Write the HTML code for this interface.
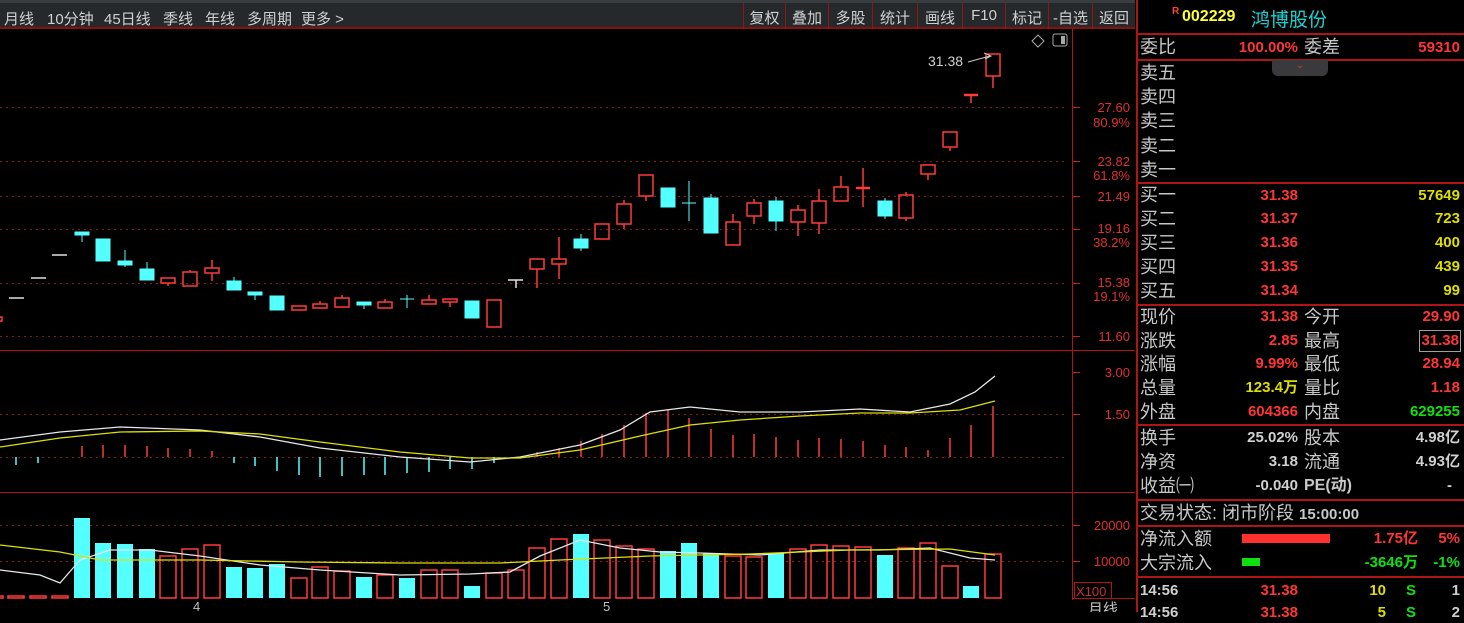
<!DOCTYPE html>
<html><head><meta charset="utf-8"><style>
*{margin:0;padding:0;box-sizing:border-box}
body{width:1464px;height:612px;background:#000;overflow:hidden;position:relative;font-family:"Liberation Sans","Noto Sans CJK SC",sans-serif;color:#c8c8c8}
.tb{position:absolute;left:0;top:0;width:1135px;height:29px;background:#26292c;border-bottom:2px solid #8a1010;border-top:3px solid #3a3d40}
.tb span{position:absolute;top:5px;font-size:15px;color:#d0d0d0}
.tb .b{border-left:1px solid #901515;height:26px;top:0;padding:4px 0 0 0;text-align:center}
.a{position:absolute;font-size:13px;color:#e03030;text-align:right;width:58px;left:1072px}
.rp{position:absolute;left:1136px;top:0;width:328px;height:612px;border-left:2px solid #b01515}
.l{position:absolute;font-size:18px;color:#c8c8c8;line-height:20px;white-space:nowrap}
.v{position:absolute;font-size:15px;font-weight:bold;text-align:right;line-height:20px;white-space:nowrap}
.hl{position:absolute;left:0;width:328px;height:2px;background:#b01515}
.r{color:#ff3636}.y{color:#dede00}.g{color:#10e010}.w{color:#d0d0d0}
</style></head><body>
<div class="tb">
<span style="left:4px">月线</span><span style="left:47px">10分钟</span><span style="left:104px">45日线</span><span style="left:163px">季线</span><span style="left:205px">年线</span><span style="left:247px">多周期</span><span style="left:301px">更多 &gt;</span>
<span class="b" style="left:743px;width:42px">复权</span><span class="b" style="left:785px;width:43px">叠加</span><span class="b" style="left:828px;width:44px">多股</span><span class="b" style="left:872px;width:45px">统计</span><span class="b" style="left:917px;width:45px">画线</span><span class="b" style="left:962px;width:43px">F10</span><span class="b" style="left:1005px;width:43px">标记</span><span class="b" style="left:1048px;width:44px">-自选</span><span class="b" style="left:1092px;width:43px">返回</span>
</div>
<svg width="1136" height="612" style="position:absolute;left:0;top:0" xmlns="http://www.w3.org/2000/svg">
<g stroke="#b01515" stroke-width="1">
<line x1="1072.5" y1="29" x2="1072.5" y2="600"/>
<line x1="0" y1="350.5" x2="1135" y2="350.5"/>
<line x1="0" y1="492.5" x2="1135" y2="492.5"/>
<line x1="1073" y1="598.5" x2="1135" y2="598.5"/>
</g>
<g stroke="#8a1818" stroke-dasharray="2,4">
<line x1="0" y1="107.5" x2="1066" y2="107.5"/><line x1="0" y1="161.5" x2="1066" y2="161.5"/><line x1="0" y1="196.5" x2="1066" y2="196.5"/><line x1="0" y1="229.5" x2="1066" y2="229.5"/><line x1="0" y1="283.5" x2="1066" y2="283.5"/><line x1="0" y1="336.5" x2="1066" y2="336.5"/>
<line x1="0" y1="414.5" x2="1066" y2="414.5"/><line x1="0" y1="457.5" x2="1066" y2="457.5"/>
<line x1="0" y1="525.5" x2="1066" y2="525.5"/><line x1="0" y1="561.5" x2="1066" y2="561.5"/>
</g>
<g stroke="#c02020"><line x1="1073" y1="107.5" x2="1080" y2="107.5"/><line x1="1073" y1="161.5" x2="1080" y2="161.5"/><line x1="1073" y1="196.5" x2="1080" y2="196.5"/><line x1="1073" y1="229.5" x2="1080" y2="229.5"/><line x1="1073" y1="283.5" x2="1080" y2="283.5"/><line x1="1073" y1="336.5" x2="1080" y2="336.5"/><line x1="1073" y1="372.5" x2="1080" y2="372.5"/><line x1="1073" y1="414.5" x2="1080" y2="414.5"/><line x1="1073" y1="525.5" x2="1080" y2="525.5"/><line x1="1073" y1="561.5" x2="1080" y2="561.5"/></g>
<!-- candles -->
<g stroke="#ff3b3b" fill="none" stroke-width="1.5">
<rect x="-12" y="317" width="14" height="4"/>
<rect x="161" y="278" width="14" height="5"/><line x1="168" y1="283" x2="168" y2="286"/>
<rect x="183" y="272" width="14" height="14"/><line x1="190" y1="270" x2="190" y2="272"/>
<rect x="205" y="268" width="14" height="5"/><line x1="212" y1="260" x2="212" y2="268"/><line x1="212" y1="273" x2="212" y2="281"/>
<rect x="292" y="306" width="14" height="4"/>
<rect x="313" y="304" width="14" height="4"/><line x1="320" y1="301" x2="320" y2="304"/>
<rect x="335" y="298" width="14" height="9"/><line x1="342" y1="295" x2="342" y2="298"/>
<rect x="378" y="302" width="14" height="6"/><line x1="385" y1="299" x2="385" y2="302"/>
<rect x="422" y="300" width="14" height="4"/><line x1="429" y1="295" x2="429" y2="300"/>
<rect x="443" y="299" width="14" height="3"/><line x1="450" y1="302" x2="450" y2="307"/>
<rect x="487" y="300" width="14" height="27"/>
<rect x="530" y="259" width="14" height="10"/><line x1="537" y1="269" x2="537" y2="288"/>
<rect x="552" y="259" width="14" height="5"/><line x1="559" y1="237" x2="559" y2="259"/><line x1="559" y1="264" x2="559" y2="279"/>
<rect x="595" y="224" width="14" height="15"/>
<rect x="617" y="204" width="14" height="20"/><line x1="624" y1="200" x2="624" y2="204"/><line x1="624" y1="224" x2="624" y2="229"/>
<rect x="639" y="175" width="14" height="21"/><line x1="646" y1="196" x2="646" y2="201"/>
<rect x="726" y="222" width="14" height="23"/><line x1="733" y1="214" x2="733" y2="222"/>
<rect x="747" y="203" width="14" height="13"/><line x1="754" y1="199" x2="754" y2="203"/><line x1="754" y1="216" x2="754" y2="224"/>
<rect x="791" y="210" width="14" height="12"/><line x1="798" y1="205" x2="798" y2="210"/><line x1="798" y1="222" x2="798" y2="236"/>
<rect x="812" y="201" width="14" height="22"/><line x1="819" y1="189" x2="819" y2="201"/><line x1="819" y1="223" x2="819" y2="234"/>
<rect x="834" y="187" width="14" height="14"/><line x1="841" y1="176" x2="841" y2="187"/>
<line x1="856" y1="188" x2="870" y2="188" stroke-width="2.5"/><line x1="863" y1="168" x2="863" y2="207"/>
<rect x="899" y="195" width="14" height="23"/><line x1="906" y1="192" x2="906" y2="195"/><line x1="906" y1="218" x2="906" y2="221"/>
<rect x="921" y="165" width="14" height="9"/><line x1="928" y1="174" x2="928" y2="180"/>
<rect x="943" y="132" width="14" height="15"/><line x1="950" y1="147" x2="950" y2="151"/>
<line x1="964" y1="95" x2="978" y2="95" stroke-width="2.5"/><line x1="971" y1="95" x2="971" y2="103"/>
<rect x="986" y="54" width="14" height="22"/><line x1="993" y1="76" x2="993" y2="88"/>
</g>
<g fill="#54ffff" stroke="#54ffff">
<rect x="75" y="232" width="14" height="3"/><line x1="82" y1="235" x2="82" y2="242"/>
<rect x="96" y="239" width="14" height="22"/>
<rect x="118" y="261" width="14" height="4"/><line x1="125" y1="250" x2="125" y2="267"/>
<rect x="140" y="269" width="14" height="11"/><line x1="147" y1="262" x2="147" y2="269"/>
<rect x="227" y="281" width="14" height="9"/><line x1="234" y1="277" x2="234" y2="281"/>
<rect x="248" y="292" width="14" height="3"/><line x1="255" y1="295" x2="255" y2="300"/>
<rect x="270" y="296" width="14" height="14"/>
<rect x="357" y="302" width="14" height="3"/><line x1="364" y1="305" x2="364" y2="309"/>
<line x1="400" y1="299" x2="414" y2="299"/><line x1="407" y1="295" x2="407" y2="308"/>
<rect x="465" y="301" width="14" height="17"/>
<rect x="574" y="239" width="14" height="9"/><line x1="581" y1="234" x2="581" y2="251"/>
<rect x="661" y="188" width="14" height="19"/>
<line x1="682" y1="203" x2="696" y2="203"/><line x1="689" y1="181" x2="689" y2="221"/>
<rect x="704" y="198" width="14" height="35"/><line x1="711" y1="194" x2="711" y2="198"/>
<rect x="769" y="201" width="14" height="20"/><line x1="776" y1="197" x2="776" y2="231"/>
<rect x="878" y="201" width="14" height="15"/><line x1="885" y1="198" x2="885" y2="219"/>
</g>
<g stroke="#e0e0e0" stroke-width="1.5">
<line x1="9" y1="298" x2="24" y2="298"/><line x1="31" y1="278" x2="46" y2="278"/><line x1="52" y1="255" x2="67" y2="255"/>
<line x1="508" y1="280" x2="523" y2="280"/><line x1="516" y1="280" x2="516" y2="288"/>
</g>
<text x="928" y="66" fill="#d0d0d0" font-size="14" font-family="Liberation Sans">31.38</text>
<path d="M968 62 L990 56 M984 53 L991 56 L985 59" stroke="#c8c8c8" fill="none"/>
<path d="M1038 35 l6 6 l-6 6 l-6 -6z" stroke="#aaa" fill="none"/>
<rect x="1053" y="34" width="14" height="12" rx="2" stroke="#aaa" fill="none"/><rect x="1061" y="36" width="4" height="8" fill="#aaa"/>
<!-- MACD bars -->
<g stroke="#ff3b3b" stroke-width="1.5">
<line x1="82" y1="457" x2="82" y2="446"/><line x1="103" y1="457" x2="103" y2="445"/><line x1="125" y1="457" x2="125" y2="445"/><line x1="147" y1="457" x2="147" y2="446"/><line x1="168" y1="457" x2="168" y2="448"/><line x1="190" y1="457" x2="190" y2="449"/><line x1="212" y1="457" x2="212" y2="451"/>
<line x1="537" y1="457" x2="537" y2="452"/><line x1="559" y1="457" x2="559" y2="448"/><line x1="581" y1="457" x2="581" y2="441"/><line x1="602" y1="457" x2="602" y2="434"/><line x1="624" y1="457" x2="624" y2="425"/><line x1="646" y1="457" x2="646" y2="413"/><line x1="668" y1="457" x2="668" y2="410"/><line x1="689" y1="457" x2="689" y2="418"/><line x1="711" y1="457" x2="711" y2="429"/><line x1="733" y1="457" x2="733" y2="435"/><line x1="754" y1="457" x2="754" y2="434"/><line x1="776" y1="457" x2="776" y2="437"/><line x1="798" y1="457" x2="798" y2="440"/><line x1="819" y1="457" x2="819" y2="438"/><line x1="841" y1="457" x2="841" y2="439"/><line x1="863" y1="457" x2="863" y2="441"/><line x1="885" y1="457" x2="885" y2="445"/><line x1="906" y1="457" x2="906" y2="447"/><line x1="928" y1="457" x2="928" y2="450"/><line x1="950" y1="457" x2="950" y2="438"/><line x1="971" y1="457" x2="971" y2="425"/><line x1="993" y1="457" x2="993" y2="406"/>
</g>
<g stroke="#54ffff" stroke-width="1.5">
<line x1="16" y1="457" x2="16" y2="465"/><line x1="38" y1="457" x2="38" y2="463"/>
<line x1="234" y1="457" x2="234" y2="463"/><line x1="255" y1="457" x2="255" y2="466"/><line x1="277" y1="457" x2="277" y2="471"/><line x1="299" y1="457" x2="299" y2="475"/><line x1="320" y1="457" x2="320" y2="477"/><line x1="342" y1="457" x2="342" y2="476"/><line x1="364" y1="457" x2="364" y2="475"/><line x1="385" y1="457" x2="385" y2="475"/><line x1="407" y1="457" x2="407" y2="473"/><line x1="429" y1="457" x2="429" y2="472"/><line x1="450" y1="457" x2="450" y2="469"/><line x1="472" y1="457" x2="472" y2="469"/><line x1="494" y1="457" x2="494" y2="463"/>
</g>
<polyline fill="none" stroke="#e8e8e8" stroke-width="1.3" points="0,440 60,432 120,427 200,430 260,437 320,448 400,457 470,462 520,457 580,445 620,430 650,412 690,407 740,412 800,412 860,409 910,412 950,404 975,392 995,376"/>
<polyline fill="none" stroke="#e0e000" stroke-width="1.3" points="0,447 60,438 120,432 200,431 260,434 320,442 400,452 470,458 520,458 580,450 640,436 690,425 740,420 800,416 860,413 910,413 960,410 995,401"/>
<!-- volume -->
<g fill="none" stroke="#ff3b3b" stroke-width="1.5">
<rect x="-13" y="596" width="16" height="2"/><rect x="8" y="596" width="16" height="2"/><rect x="30" y="596" width="16" height="2"/><rect x="52" y="596" width="16" height="2"/>
<rect x="160" y="556" width="16" height="42"/><rect x="182" y="549" width="16" height="49"/><rect x="204" y="545" width="16" height="53"/>
<rect x="291" y="578" width="16" height="20"/><rect x="312" y="567" width="16" height="31"/><rect x="334" y="571" width="16" height="27"/>
<rect x="377" y="575" width="16" height="23"/><rect x="421" y="570" width="16" height="28"/><rect x="442" y="570" width="16" height="28"/>
<rect x="486" y="573" width="16" height="25"/><rect x="508" y="570" width="16" height="28"/><rect x="529" y="548" width="16" height="50"/><rect x="551" y="539" width="16" height="59"/>
<rect x="594" y="540" width="16" height="58"/><rect x="616" y="546" width="16" height="52"/><rect x="638" y="549" width="16" height="49"/>
<rect x="725" y="556" width="16" height="42"/><rect x="746" y="557" width="16" height="41"/><rect x="790" y="549" width="16" height="49"/><rect x="811" y="545" width="16" height="53"/><rect x="833" y="546" width="16" height="52"/><rect x="855" y="547" width="16" height="51"/><rect x="898" y="548" width="16" height="50"/><rect x="920" y="543" width="16" height="55"/><rect x="942" y="566" width="16" height="32"/><rect x="985" y="554" width="16" height="44"/>
</g>
<g fill="#54ffff">
<rect x="74" y="518" width="16" height="80"/><rect x="95" y="543" width="16" height="55"/><rect x="117" y="544" width="16" height="54"/><rect x="139" y="549" width="16" height="49"/>
<rect x="226" y="567" width="16" height="31"/><rect x="247" y="568" width="16" height="30"/><rect x="269" y="564" width="16" height="34"/>
<rect x="356" y="577" width="16" height="21"/><rect x="399" y="578" width="16" height="20"/><rect x="464" y="586" width="16" height="12"/>
<rect x="573" y="534" width="16" height="64"/><rect x="660" y="551" width="16" height="47"/><rect x="681" y="543" width="16" height="55"/><rect x="703" y="553" width="16" height="45"/><rect x="768" y="553" width="16" height="45"/><rect x="877" y="555" width="16" height="43"/><rect x="963" y="586" width="16" height="12"/>
</g>
<polyline fill="none" stroke="#e8e8e8" stroke-width="1.3" points="0,570 40,575 60,583 80,560 110,550 150,550 200,556 260,565 320,570 400,575 470,574 510,572 540,556 580,540 620,548 660,552 700,553 760,555 820,550 880,550 930,548 970,558 995,560"/>
<polyline fill="none" stroke="#e0e000" stroke-width="1.3" points="0,545 60,552 100,560 200,560 300,562 400,563 500,563 560,560 650,556 750,554 850,550 950,549 995,555"/>
<rect x="1074.5" y="582.5" width="37" height="16" fill="none" stroke="#b01515"/>
<text x="1076" y="596" fill="#c03030" font-size="13" font-family="Liberation Sans">X100</text>
<text x="193" y="611" fill="#c0c0c0" font-size="13" font-family="Liberation Sans">4</text>
<text x="603" y="611" fill="#c0c0c0" font-size="13" font-family="Liberation Sans">5</text>
<text x="1088" y="614" fill="#c0c0c0" font-size="15" font-family="Liberation Sans,Noto Sans CJK SC">月线</text>
</svg>
<div class="a" style="top:100px">27.60</div><div class="a" style="top:115px">80.9%</div>
<div class="a" style="top:154px">23.82</div><div class="a" style="top:168px">61.8%</div>
<div class="a" style="top:189px">21.49</div>
<div class="a" style="top:221px">19.16</div><div class="a" style="top:235px">38.2%</div>
<div class="a" style="top:275px">15.38</div><div class="a" style="top:289px">19.1%</div>
<div class="a" style="top:329px">11.60</div>
<div class="a" style="top:365px">3.00</div><div class="a" style="top:407px">1.50</div>
<div class="a" style="top:518px">20000</div><div class="a" style="top:554px">10000</div>
<div class="rp">
<div class="hl" style="top:33px"></div><div class="hl" style="top:59px"></div><div class="hl" style="top:182px"></div><div class="hl" style="top:304px"></div><div class="hl" style="top:424px"></div><div class="hl" style="top:499px"></div><div class="hl" style="top:525px"></div><div class="hl" style="top:576px"></div>
<div style="position:absolute;left:34px;top:6px;font-size:10px;font-weight:bold;color:#ff4040">R</div>
<div style="position:absolute;left:44px;top:8px;font-size:16px;font-weight:bold;color:#ffff30">002229</div>
<div style="position:absolute;left:113px;top:5px;font-size:19px;color:#20d0d0">鸿博股份</div>
<div style="position:absolute;left:134px;top:60px;width:56px;height:16px;background:#3a3a3c;border-radius:0 0 6px 6px;color:#e03030;font-size:10px;text-align:center;line-height:12px">⌄</div>
<div class="l" style="left:2px;top:37px">委比</div><div class="v r" style="right:166px;top:38px">100.00%</div><div class="l" style="left:166px;top:37px">委差</div><div class="v r" style="right:4px;top:38px">59310</div>
<div class="l" style="left:2px;top:63px">卖五</div><div class="l" style="left:2px;top:87px">卖四</div><div class="l" style="left:2px;top:111px">卖三</div><div class="l" style="left:2px;top:136px">卖二</div><div class="l" style="left:2px;top:160px">卖一</div>
<div class="l" style="left:2px;top:185px">买一</div><div class="v r" style="right:166px;top:186px">31.38</div><div class="v y" style="right:4px;top:186px">57649</div>
<div class="l" style="left:2px;top:209px">买二</div><div class="v r" style="right:166px;top:209px">31.37</div><div class="v y" style="right:4px;top:209px">723</div>
<div class="l" style="left:2px;top:233px">买三</div><div class="v r" style="right:166px;top:233px">31.36</div><div class="v y" style="right:4px;top:233px">400</div>
<div class="l" style="left:2px;top:257px">买四</div><div class="v r" style="right:166px;top:257px">31.35</div><div class="v y" style="right:4px;top:257px">439</div>
<div class="l" style="left:2px;top:281px">买五</div><div class="v r" style="right:166px;top:281px">31.34</div><div class="v y" style="right:4px;top:281px">99</div>
<div class="l" style="left:2px;top:307px">现价</div><div class="v r" style="right:166px;top:307px">31.38</div><div class="l" style="left:166px;top:307px">今开</div><div class="v r" style="right:4px;top:307px">29.90</div>
<div class="l" style="left:2px;top:331px">涨跌</div><div class="v r" style="right:166px;top:331px">2.85</div><div class="l" style="left:166px;top:331px">最高</div><div class="v r" style="right:3px;top:330px;border:1px solid #a0a0a0;padding:0 1px">31.38</div>
<div class="l" style="left:2px;top:354px">涨幅</div><div class="v r" style="right:166px;top:354px">9.99%</div><div class="l" style="left:166px;top:354px">最低</div><div class="v r" style="right:4px;top:354px">28.94</div>
<div class="l" style="left:2px;top:378px">总量</div><div class="v y" style="right:166px;top:378px">123.4万</div><div class="l" style="left:166px;top:378px">量比</div><div class="v r" style="right:4px;top:378px">1.18</div>
<div class="l" style="left:2px;top:402px">外盘</div><div class="v r" style="right:166px;top:402px">604366</div><div class="l" style="left:166px;top:402px">内盘</div><div class="v g" style="right:4px;top:402px">629255</div>
<div class="l" style="left:2px;top:428px">换手</div><div class="v w" style="right:166px;top:428px">25.02%</div><div class="l" style="left:166px;top:428px">股本</div><div class="v w" style="right:4px;top:428px">4.98亿</div>
<div class="l" style="left:2px;top:452px">净资</div><div class="v w" style="right:166px;top:452px">3.18</div><div class="l" style="left:166px;top:452px">流通</div><div class="v w" style="right:4px;top:452px">4.93亿</div>
<div class="l" style="left:2px;top:476px">收益㈠</div><div class="v w" style="right:166px;top:476px">-0.040</div><div class="l" style="left:166px;top:476px;font-size:16px;font-weight:bold">PE(动)</div><div class="v w" style="right:12px;top:476px">-</div>
<div class="l" style="left:2px;top:503px">交易状态: 闭市阶段 <b style="font-size:15px">15:00:00</b></div>
<div class="l" style="left:2px;top:529px">净流入额</div><div style="position:absolute;left:104px;top:534px;width:88px;height:9px;background:#ff3030"></div><div class="v r" style="right:46px;top:529px">1.75亿</div><div class="v r" style="right:4px;top:529px">5%</div>
<div class="l" style="left:2px;top:553px">大宗流入</div><div style="position:absolute;left:104px;top:558px;width:18px;height:8px;background:#10e010"></div><div class="v g" style="right:46px;top:553px">-3646万</div><div class="v g" style="right:4px;top:553px">-1%</div>
<div class="v w" style="left:2px;top:581px">14:56</div><div class="v r" style="right:166px;top:581px">31.38</div><div class="v y" style="right:78px;top:581px">10</div><div class="v g" style="right:48px;top:581px">S</div><div class="v w" style="right:4px;top:581px">1</div>
<div class="v w" style="left:2px;top:603px">14:56</div><div class="v r" style="right:166px;top:603px">31.38</div><div class="v y" style="right:78px;top:603px">5</div><div class="v g" style="right:48px;top:603px">S</div><div class="v w" style="right:4px;top:603px">2</div>
</div>
</body></html>
